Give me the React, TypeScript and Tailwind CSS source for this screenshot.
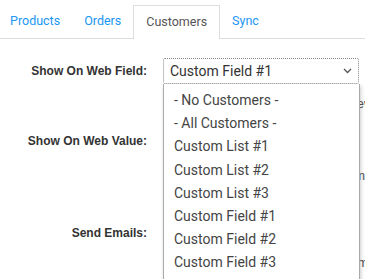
import { useState } from 'react'

const tabs = ['Products', 'Orders', 'Customers', 'Sync']

const options = [
  '- No Customers -',
  '- All Customers -',
  'Custom List #1',
  'Custom List #2',
  'Custom List #3',
  'Custom Field #1',
  'Custom Field #2',
  'Custom Field #3'
]

function Chevron () {
  return (
    <svg width="9" height="6" viewBox="0 0 9 6" className="shrink-0">
      <path d="M1 1l3.5 3.5L8 1" fill="none" stroke="#555" strokeWidth="1.3" />
    </svg>
  )
}

export default function App () {
  const [tab] = useState('Customers')
  const [value] = useState('Custom Field #1')

  return (
    <div className="w-[365px] h-[279px] overflow-hidden bg-white font-['Roboto',sans-serif]">
      <div className="flex mt-[5px] border-b border-[#ddd] h-[34px]">
        {tabs.map((t) => (
          <div
            key={t}
            className={
              t === tab
                ? 'px-3 flex items-center text-[12.5px] text-[#555] bg-white border border-b-0 border-[#ddd] -mb-px'
                : 'px-3 flex items-center text-[12.5px] text-[#2196f3] first:pl-[10px]'
            }
          >
            {t}
          </div>
        ))}
      </div>

      <div className="flex flex-col pt-[19px] font-['Liberation_Sans',sans-serif]">
        <div className="flex gap-4">
          <div className="w-[147px] h-[26px] flex items-center justify-end text-[12px] font-bold text-[#333]">Show On Web Field:</div>
          <div className="relative w-[196px]">
            <div className="h-[26px] flex items-center justify-between pl-[6px] pr-[6px] border border-dotted border-[#888] rounded-[2px] text-[14px] text-[#333] font-['Roboto',sans-serif]">
              <span>{value}</span>
              <Chevron />
            </div>
            <p className="mt-[12px] pl-[8px] h-[15px] leading-[15px] text-[13px] text-[#555] whitespace-nowrap">Field used for visibility on web view and in</p>

            <div className="absolute left-0 top-[26px] w-[197px] bg-white border border-t-0 border-[#aaa] shadow-[1px_2px_4px_rgba(0,0,0,0.2)] pt-[5px] pb-[6px] z-10 font-['Roboto',sans-serif]">
              {options.map((o) => (
                <div key={o} className="h-[23.2px] flex items-center pl-[10px] text-[14px] text-[#444]">{o}</div>
              ))}
            </div>
          </div>
        </div>

        <div className="flex gap-4 mt-[17px]">
          <div className="w-[147px] h-[26px] flex items-center justify-end text-[12px] font-bold text-[#333]">Show On Web Value:</div>
          <div className="w-[196px]">
            <div className="h-[26px] border border-[#ccc] rounded-[2px]" />
            <p className="mt-[14px] pl-[8px] h-[15px] leading-[15px] text-[13px] text-[#555] whitespace-nowrap">Value shown for matching customers abc</p>
          </div>
        </div>

        <div className="flex gap-4 mt-[37px]">
          <div className="w-[147px] h-[26px] flex items-center justify-end text-[12px] font-bold text-[#333]">Send Emails:</div>
          <div className="w-[196px]">
            <div className="h-[26px] border border-[#ccc] rounded-[2px]" />
            <p className="mt-[9px] pl-[8px] h-[15px] leading-[15px] text-[13px] text-[#555] whitespace-nowrap">Send notification emails to customers icc</p>
          </div>
        </div>
      </div>
    </div>
  )
}
